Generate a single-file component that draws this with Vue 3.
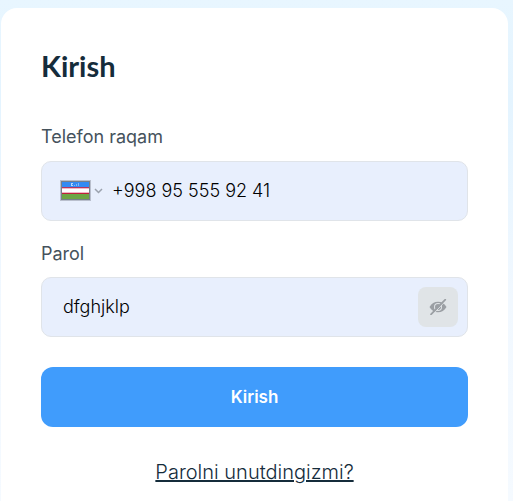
<script setup>
import { ref } from 'vue'

const phone = ref('+998 95 555 92 41')
const password = ref('dfghjklp')
const visible = ref(true)
</script>

<template>
  <main class="page">
    <form class="card" @submit.prevent>
      <h1 class="title">Kirish</h1>

      <label class="label" for="phone">Telefon raqam</label>
      <div class="field">
        <button class="country" type="button" aria-label="Uzbekistan">
          <svg class="flag" viewBox="0 0 31 22" shape-rendering="crispEdges" aria-hidden="true">
            <rect width="31" height="21" fill="#b9bfcd" />
            <rect x="1" y="1" width="29" height="19" fill="#777f8b" />
            <rect x="2" y="2" width="27" height="5" fill="#338af3" />
            <rect x="2" y="7" width="27" height="1" fill="#b6355f" />
            <rect x="2" y="8" width="27" height="5" fill="#ffffff" />
            <rect x="2" y="8" width="27" height="1" fill="#f0b8c6" />
            <rect x="2" y="12" width="27" height="1" fill="#f0b8c6" />
            <rect x="2" y="13" width="27" height="1" fill="#c0203c" />
            <rect x="2" y="14" width="27" height="5" fill="#6da544" />
            <path d="M11 3h2v1h-1v1h1v1h-2z" fill="#b5d7fb" />
            <path d="M14 5h1v1h-1zM16 4h1v2h-1zM18 3h1v3h-1z" fill="#7fb6f7" />
          </svg>
          <svg class="chevron" viewBox="0 0 9 6" aria-hidden="true">
            <path d="M1 1l3.5 3.5L8 1" fill="none" stroke="#9ba2ae" stroke-width="1.5" />
          </svg>
        </button>
        <input id="phone" v-model="phone" class="input" type="tel" />
      </div>

      <label class="label" for="password">Parol</label>
      <div class="field">
        <input id="password" v-model="password" class="input" :type="visible ? 'text' : 'password'" />
        <button class="toggle" type="button" aria-label="Parol" @click="visible = !visible">
          <svg class="eye" viewBox="0 0 18 16" aria-hidden="true">
            <path d="M.5 8C2.4 4.400 5.400 2.700 9 2.700S15.600 4.400 17.500 8C15.600 11.600 12.600 13.300 9 13.300S2.400 11.600 .5 8z" fill="#9b9fa4" />
            <circle cx="9" cy="8" r="4" fill="#e0e4e7" />
            <circle cx="9" cy="8" r="3" fill="#9b9fa4" />
            <path d="M3.200 16.200L17.200 1.200" stroke="#e0e4e7" stroke-width="1" />
            <path d="M2 15.300L16.300 .6" stroke="#9b9fa4" stroke-width="1.700" stroke-linecap="round" />
          </svg>
        </button>
      </div>

      <button class="submit" type="submit">Kirish</button>
      <a class="forgot" href="#">Parolni unutdingizmi?</a>
    </form>
  </main>
</template>

<style>
body {
  margin: 0;
}
</style>

<style scoped>
.page {
  box-sizing: border-box;
  min-height: 100vh;
  padding: 8px 5px 0 1px;
  display: flex;
  background: linear-gradient(180deg, #e8f6ff 0, #e4f4ff 100px, #f1f8ff 300px, #f5faff 100%);
  font-family: Inter, "Liberation Sans", sans-serif;
}

.card {
  box-sizing: border-box;
  flex: 1;
  min-width: 0;
  padding: 39px 40px 0;
  display: flex;
  flex-direction: column;
  border-radius: 16px 16px 0 0;
  background: #ffffff;
}

.title {
  margin: 0 0 40px;
  font-family: Lato, sans-serif;
  font-size: 29px;
  line-height: 38px;
  font-weight: 700;
  color: #152c3b;
}

.label {
  margin-bottom: 12px;
  font-size: 18px;
  line-height: 24px;
  color: #45525c;
}

.field {
  box-sizing: border-box;
  height: 60px;
  margin-bottom: 20px;
  padding: 0 9px 0 18px;
  display: flex;
  align-items: center;
  border: 1px solid #e0e4e9;
  border-radius: 10px;
  background: #e8effd;
}

.field + .label {
  margin: 1px 0 11px;
}

.country {
  padding: 0;
  margin-right: 6px;
  display: flex;
  align-items: center;
  gap: 3px;
  border: 0;
  background: none;
}

.flag {
  width: 31px;
  height: 22px;
}

.chevron {
  width: 9px;
  height: 6px;
}

.input {
  flex: 1;
  min-width: 0;
  padding: 0 3px;
  border: 0;
  outline: 0;
  background: transparent;
  font-family: inherit;
  font-size: 18px;
  line-height: 24px;
  font-weight: 300;
  color: #000000;
}

.toggle {
  width: 40px;
  height: 40px;
  padding: 0;
  display: flex;
  align-items: center;
  justify-content: center;
  border: 0;
  border-radius: 8px;
  background: #e0e4e7;
}

.eye {
  width: 18px;
  height: 16px;
}

.submit {
  height: 60px;
  margin: 10px 0 30px;
  border: 0;
  border-radius: 12px;
  background: #409cfc;
  font-family: inherit;
  font-size: 17px;
  font-weight: 600;
  color: #ffffff;
}

.forgot {
  align-self: center;
  font-size: 20px;
  line-height: 30px;
  font-weight: 300;
  color: #152c3b;
  text-decoration: underline;
}
</style>
